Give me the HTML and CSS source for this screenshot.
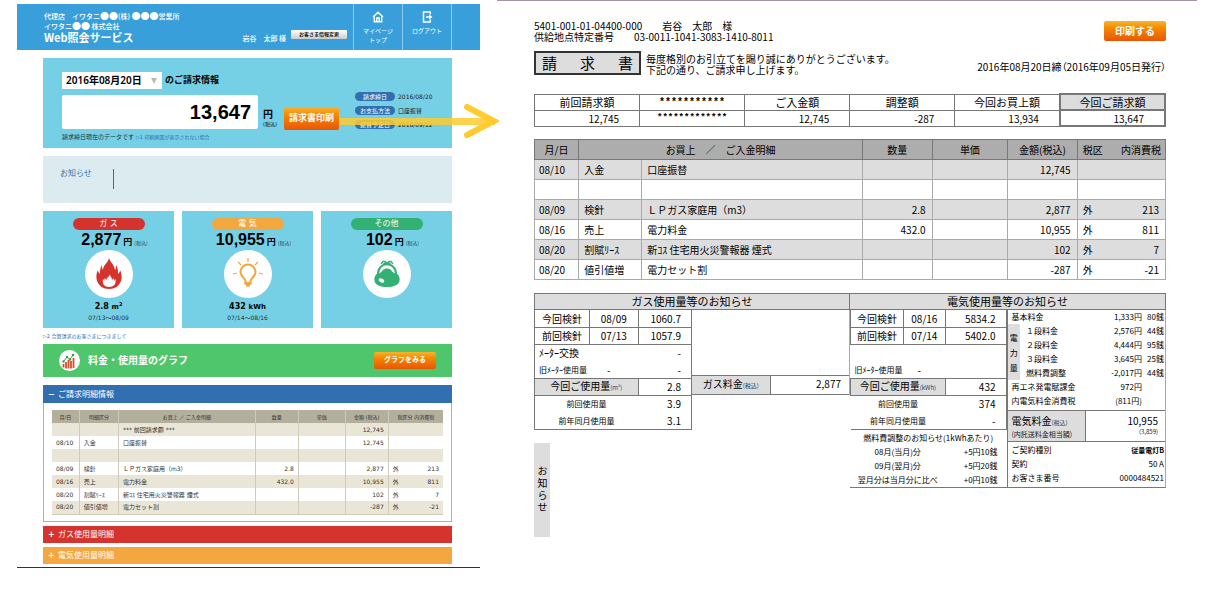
FILE: index.html
```html
<!DOCTYPE html>
<html lang="ja">
<head>
<meta charset="utf-8">
<title>Web照会サービス</title>
<link rel="stylesheet" href="styles.css">
</head>
<body>
<div class="page">
  <main class="portal">
    <header class="site-head">
      <div class="brand">
        <p>代理店　イワタニ<span>●●</span>(株) <span>●●●</span>営業所</p>
        <p>イワタニ<span>●●</span> 株式会社</p>
        <h1>Web照会サービス</h1>
      </div>
      <p class="user">岩谷　太郎 様</p>
      <button class="btn-profile" type="button">お客さま情報変更</button>
      <nav class="site-nav">
        <a href="#top"><svg viewBox="0 0 12 12" aria-hidden="true"><path d="M1 6 6 1.3 11 6M2.3 5.5v5.3h7.4V5.5M4.8 10.5V7h2.4v3.5" fill="none" stroke="#fff" stroke-width="1.4"/></svg>マイページ<br>トップ</a>
        <a href="#logout"><svg viewBox="0 0 12 12" aria-hidden="true"><path d="M9.3 3.500V1H2.500v10h6.800V8.500" fill="none" stroke="#fff" stroke-width="1.5"/><path d="M5 5.300h3V3.400L11.500 6 8 8.600V6.700H5z" fill="#fff"/></svg>ログアウト</a>
      </nav>
    </header>

    <div class="portal-body">
      <section class="hero">
        <div class="period">
          <span class="select-wrap"><select id="month"><option>2016年08月20日</option></select></span>
          <label for="month">のご請求情報</label>
        </div>
        <div class="hero-row">
          <div class="total">13,647</div>
          <div class="unit"><b>円</b><small>(税込)</small></div>
          <button class="btn-orange btn-bill" type="button">請求書印刷</button>
          <dl class="facts">
            <dt>請求締日</dt><dd>2016/08/20</dd>
            <dt>お支払方法</dt><dd>口座振替</dd>
            <dt>振替予定日</dt><dd>2016/09/12</dd>
          </dl>
        </div>
        <p class="hero-note">請求締日現在のデータです <a href="#n1">▷1 印刷画面が表示されない場合</a></p>
        <div class="arrow"><span class="arrow-line"></span><svg viewBox="0 0 36 36" aria-hidden="true"><path d="M4 4 31 18 4 32" fill="none" stroke="#ffcb2f" stroke-width="6" stroke-linecap="round" stroke-linejoin="miter"/></svg></div>
      </section>

      <section class="notice"><h2>お知らせ</h2><div class="notice-text"></div></section>

      <section class="cards">
        <article class="card">
          <h2 class="pill red">ガ ス</h2>
          <p class="price">2,877<b>円</b><small>(税込)</small></p>
          <div class="disc"><svg viewBox="0 0 48 48" aria-hidden="true"><path d="M24 8c1 4 5 6 6 12 1-1 1-3 1-5 2 3 2 6 2 9 1-1 2-2 2-4 2 4 2 8 1 11-2 5-6 8-12 8s-10-3-12-8c-1-4-1-7 1-11 0 2 1 3 2 4 0-3 0-6 2-9 0 2 0 4 1 5 0-5 5-7 6-12z" fill="#d5332d"/><path d="M25 24c0 3 2 3 2 6l2-2v3l1.500-2c1 5-2 8-6.500 8s-7-3-6-8l1.500 2v-3l2 2c0-3 3-3 3.500-6z" fill="#fff"/></svg></div>
          <p class="usage">2.8 <span>m<sup>2</sup></span></p>
          <p class="term">07/13〜08/09</p>
        </article>
        <article class="card">
          <h2 class="pill amber">電 気</h2>
          <p class="price">10,955<b>円</b><small>(税込)</small></p>
          <div class="disc"><svg viewBox="0 0 48 48" aria-hidden="true"><g fill="none" stroke="#f3a73f"><path d="M21.500 33v-2c0-3-5-4-5-9a7.500 7.500 0 0 1 15 0c0 5-5 6-5 9v2z" stroke-width="2"/><path d="M24 12V8M31 15l3-3M17 15l-3-3M35 23l4 1M13 23l-4 1" stroke-width="1.200"/></g><path d="M20.500 32h7v2.500h-1.500v2h-4v-2h-1.500z" fill="#f3a73f"/></svg></div>
          <p class="usage">432 <span>kWh</span></p>
          <p class="term">07/14〜08/16</p>
        </article>
        <article class="card">
          <h2 class="pill green">その他</h2>
          <p class="price">102<b>円</b><small>(税込)</small></p>
          <div class="disc"><svg viewBox="0 0 48 48" aria-hidden="true"><path d="M13.500 24c3 0 5-2 6.500-4 2-2 6-2 8 0 1.500 2 3.500 4 6.500 4 2 2 2.500 5 2 7-1 4-6 6-12.500 6S12.500 35 11.500 31c-.500-2 0-5 2-7z" fill="#33b073"/><path d="M15 24c0-13 18-13 18 0" fill="none" stroke="#33b073" stroke-width="2"/><path d="m18 14 2-2.500h2l2 1.500 2-1.500h2l2 2.500M20 14.500l2-1.500 2 1.500 2-1.500 2 1.500" fill="none" stroke="#33b073" stroke-width="1.300"/><ellipse cx="18.500" cy="30.500" rx="3" ry="1.800" fill="#fff" transform="rotate(25 18.500 30.500)"/></svg></div>
        </article>
      </section>

      <p class="card-note"><a href="#n2">▷2 合算請求のお客さまにつきまして</a></p>

      <section class="graph-bar">
        <svg viewBox="0 0 21 21" aria-hidden="true"><circle cx="10.500" cy="10.500" r="10.500" fill="#fff"/><path d="M4.500 14v3.500M7 12v6.500M9.500 10v8.500M12 11v7.500M14.500 8v10" stroke="#dc4a28" stroke-width="1.800"/><path d="M4.500 11.500 8 7l3 2.500 3-4.500" fill="none" stroke="#3b9c52" stroke-width="1"/><g fill="#3b9c52"><circle cx="4.500" cy="11.500" r="1.200"/><circle cx="8" cy="7" r="1.200"/><circle cx="11" cy="9.500" r="1.200"/><circle cx="14" cy="5" r="1.300"/></g></svg>
        <h2>料金・使用量のグラフ</h2>
        <button class="btn-orange btn-graph" type="button">グラフをみる</button>
      </section>

      <section class="detail">
        <h2><button class="fold blue" type="button"><span>−</span>ご請求明細情報</button></h2>
        <div class="detail-box">
          <table class="mini">
            <colgroup><col class="m1"><col class="m2"><col class="m3"><col class="m4"><col class="m5"><col class="m6"><col class="m7"><col class="m8"></colgroup>
            <thead><tr><th>月/日</th><th>明細区分</th><th>お買上 ／ ご入金明細</th><th>数量</th><th>単価</th><th>金額 (税込)</th><th colspan="2">税区分 内消費税</th></tr></thead>
            <tbody>
              <tr><td></td><td></td><td>*** 前回請求額 ***</td><td></td><td></td><td class="num">12,745</td><td></td><td class="num"></td></tr>
              <tr><td>08/10</td><td>入金</td><td>口座振替</td><td></td><td></td><td class="num">12,745</td><td></td><td class="num"></td></tr>
              <tr><td></td><td></td><td></td><td></td><td></td><td></td><td></td><td class="num"></td></tr>
              <tr><td>08/09</td><td>検針</td><td>ＬＰガス家庭用（m3）</td><td class="num">2.8</td><td></td><td class="num">2,877</td><td>外</td><td class="num">213</td></tr>
              <tr><td>08/16</td><td>売上</td><td>電力料金</td><td class="num">432.0</td><td></td><td class="num">10,955</td><td>外</td><td class="num">811</td></tr>
              <tr><td>08/20</td><td>割賦ﾘｰｽ</td><td>新ｺｽ 住宅用火災警報器 煙式</td><td></td><td></td><td class="num">102</td><td>外</td><td class="num">7</td></tr>
              <tr><td>08/20</td><td>値引値増</td><td>電力セット割</td><td></td><td></td><td class="num">-287</td><td>外</td><td class="num">-21</td></tr>
            </tbody>
          </table>
        </div>
      </section>
      <button class="fold crimson" type="button"><span>+</span>ガス使用量明細</button>
      <button class="fold gold" type="button"><span>+</span>電気使用量明細</button>
    </div>
  </main>

  <section class="invoice">
    <header class="inv-head">
      <div>
        <p>5401-001-01-04400-000　　岩谷　太郎　様</p>
        <p>供給地点特定番号　　03-0011-1041-3083-1410-8011</p>
      </div>
      <button class="btn-orange btn-print" type="button">印刷する</button>
    </header>
    <div class="inv-title">
      <h2><span>請</span><span>求</span><span>書</span></h2>
      <p class="greet">毎度格別のお引立てを賜り誠にありがとうございます。<br>下記の通り、ご請求申し上げます。</p>
      <p class="issued">2016年08月20日締（2016年09月05日発行）</p>
    </div>

    <table class="summary">
      <thead><tr><th>前回請求額</th><th class="stars">***********</th><th>ご入金額</th><th>調整額</th><th>今回お買上額</th><th class="key">今回ご請求額</th></tr></thead>
      <tbody><tr><td>12,745</td><td class="stars">*************</td><td>12,745</td><td>-287</td><td>13,934</td><td class="key">13,647</td></tr></tbody>
    </table>

    <table class="lines">
      <colgroup><col class="l1"><col class="l2"><col class="l3"><col class="l4"><col class="l5"><col class="l6"><col class="l7"><col class="l8"></colgroup>
      <thead><tr><th>月/日</th><th colspan="2">お買上　／　ご入金明細</th><th>数量</th><th>単価</th><th>金額(税込)</th><th class="open">税区</th><th class="tax">内消費税</th></tr></thead>
      <tbody>
        <tr><td>08/10</td><td>入金</td><td>口座振替</td><td></td><td></td><td class="num">12,745</td><td class="open"></td><td class="tax"></td></tr>
        <tr><td></td><td></td><td></td><td></td><td></td><td></td><td class="open"></td><td class="tax"></td></tr>
        <tr><td>08/09</td><td>検針</td><td>ＬＰガス家庭用（m3）</td><td class="num">2.8</td><td></td><td class="num">2,877</td><td class="open">外</td><td class="tax">213</td></tr>
        <tr><td>08/16</td><td>売上</td><td>電力料金</td><td class="num">432.0</td><td></td><td class="num">10,955</td><td class="open">外</td><td class="tax">811</td></tr>
        <tr><td>08/20</td><td>割賦ﾘｰｽ</td><td>新ｺｽ 住宅用火災警報器 煙式</td><td></td><td></td><td class="num">102</td><td class="open">外</td><td class="tax">7</td></tr>
        <tr><td>08/20</td><td>値引値増</td><td>電力セット割</td><td></td><td></td><td class="num">-287</td><td class="open">外</td><td class="tax">-21</td></tr>
      </tbody>
    </table>

    <div class="energy">
      <section class="gas">
        <h3>ガス使用量等のお知らせ</h3>
        <div class="gas-body">
          <table class="meter">
            <colgroup><col class="g1"><col class="g2"><col class="g3"></colgroup>
            <tr><th class="cell">今回検針</th><td class="cell mid">08/09</td><td class="cell">1060.7</td></tr>
            <tr><th class="cell">前回検針</th><td class="cell mid">07/13</td><td class="cell">1057.9</td></tr>
            <tr><th class="left">ﾒｰﾀｰ交換</th><td></td><td>-</td></tr>
            <tr><th class="small left">旧ﾒｰﾀｰ使用量</th><td class="old">-</td><td>-</td></tr>
            <tr><th class="cell shade" colspan="2">今回ご使用量<small>(m³)</small></th><td class="cell">2.8</td></tr>
            <tr><th class="small" colspan="2">前回使用量</th><td>3.9</td></tr>
            <tr><th class="small" colspan="2">前年同月使用量</th><td>3.1</td></tr>
          </table>
          <dl class="gas-fee"><dt>ガス料金<small>(税込)</small></dt><dd>2,877</dd></dl>
        </div>
        <aside class="side-note">お知らせ</aside>
      </section>

      <section class="power">
        <h3>電気使用量等のお知らせ</h3>
        <div class="power-body">
          <div class="power-left">
            <table class="meter">
              <colgroup><col class="p1"><col class="p2"><col class="p3"></colgroup>
              <tr><th class="cell">今回検針</th><td class="cell mid">08/16</td><td class="cell">5834.2</td></tr>
              <tr><th class="cell">前回検針</th><td class="cell mid">07/14</td><td class="cell">5402.0</td></tr>
              <tr><th></th><td></td><td></td></tr>
              <tr><th class="small left">旧ﾒｰﾀｰ使用量</th><td class="old">-</td><td></td></tr>
              <tr><th class="cell shade" colspan="2">今回ご使用量<small>(kWh)</small></th><td class="cell">432</td></tr>
              <tr><th class="small" colspan="2">前回使用量</th><td>374</td></tr>
              <tr><th class="small" colspan="2">前年同月使用量</th><td>-</td></tr>
            </table>
            <table class="adjust">
              <caption>燃料費調整のお知らせ(1kWhあたり)</caption>
              <tr><th>08月(当月)分</th><td>+5円10銭</td></tr>
              <tr><th>09月(翌月)分</th><td>+5円20銭</td></tr>
              <tr><th>翌月分は当月分に比べ</th><td>+0円10銭</td></tr>
            </table>
          </div>
          <div class="power-right">
            <table class="fees">
              <colgroup><col class="f1"><col class="f2"><col class="f3"><col class="f4"></colgroup>
              <tr><th colspan="2">基本料金</th><td>1,333円</td><td>80銭</td></tr>
              <tr><th class="kwh" rowspan="4">電<br>力<br>量</th><th class="step">１段料金</th><td>2,576円</td><td>44銭</td></tr>
              <tr><th class="step">２段料金</th><td>4,444円</td><td>95銭</td></tr>
              <tr><th class="step">３段料金</th><td>3,645円</td><td>25銭</td></tr>
              <tr><th class="step">燃料費調整</th><td>-2,017円</td><td>44銭</td></tr>
              <tr><th colspan="2">再エネ発電賦課金</th><td>972円</td><td></td></tr>
              <tr><th colspan="2">内電気料金消費税</th><td>(811円)</td><td></td></tr>
            </table>
            <dl class="power-fee"><dt>電気料金<small>(税込)</small><span>(内託送料金相当額)</span></dt><dd>10,955<span>(3,859)</span></dd></dl>
            <dl class="contract">
              <dt>ご契約種別</dt><dd><b>従量電灯B</b></dd>
              <dt>契約</dt><dd>50 A</dd>
              <dt>お客さま番号</dt><dd>0000484521</dd>
            </dl>
          </div>
        </div>
      </section>
    </div>
  </section>
</div>
</body>
</html>
```

FILE: styles.css
```css
* { box-sizing: border-box; }
body, h1, h2, h3, p, dl, dd { margin: 0; }
body { background: #fff; color: #000; font-family: "Noto Sans CJK JP", sans-serif; }
h1, h2, h3, th { font-weight: 400; }
button { margin: 0; padding: 0; border: 0; font-family: inherit; white-space: nowrap; cursor: pointer; }
a { color: inherit; text-decoration: none; }
table { width: 100%; border-collapse: collapse; table-layout: fixed; }
th, td { padding: 0; white-space: nowrap; }
svg { display: block; }

.page { display: grid; grid-template-columns: 463fr 700fr; gap: 17px; align-items: start; padding: 0 17px; }

/* Customer portal */
.portal { min-width: 0; margin-top: 4px; padding-bottom: 3px; border-bottom: 1px solid #33303c; font-family: "DejaVu Sans", "Noto Sans CJK JP", sans-serif; }
.site-head { display: flex; height: 46px; background: #389fdb; color: #fff; white-space: nowrap; }
.brand { flex: 1; padding: 7px 0 0 27px; font: 7px/10px "Noto Sans CJK JP", sans-serif; }
.brand p { font-weight: 500; }
.brand span { font-size: 9px; line-height: 8px; }
.brand h1 { font-size: 11px; line-height: 13px; font-weight: 700; }
.user { padding: 28px 5px 0 0; font: 500 7px/12px "Noto Sans CJK JP", sans-serif; }
.btn-profile { align-self: flex-start; width: 56px; height: 9px; margin: 26px 6px 0 0; border-radius: 1px; background: linear-gradient(#fff, #ccc); color: #222; font-size: 5px; line-height: 9px; font-weight: 700; }
.site-nav { display: flex; padding-right: 28px; }
.site-nav a { width: 49px; padding-top: 7px; border-left: 1px solid #8fcaf0; font-size: 6px; line-height: 9px; text-align: center; }
.site-nav a:last-child { width: 50px; border-right: 1px solid #8fcaf0; }
.site-nav svg { width: 12px; height: 12px; margin: 0 auto 3px; }

.portal-body { padding: 8px 28px 0 26px; }
.hero { position: relative; height: 90px; padding: 14px 19px 0; background: #76d0e5; }
.period { display: flex; align-items: center; gap: 3px; font-size: 9px; font-weight: 700; line-height: 17px; }
.select-wrap { position: relative; }
.select-wrap::after { content: ""; position: absolute; right: 5px; top: 6px; border: 3px solid transparent; border-top: 6px solid #bcbcab; border-bottom: 0; pointer-events: none; }
.select-wrap select { display: block; width: 100px; height: 17px; padding: 0 4px; border: 0; appearance: none; background: #fff; color: #000; font: inherit; font-family: "Noto Sans", "Noto Sans CJK JP", sans-serif; font-size: 10px; font-weight: 600; line-height: 17px; }
.hero-row { display: flex; align-items: flex-start; margin-top: 6px; }
.total { flex: 1; height: 34px; padding-right: 7px; border-radius: 2px; background: #fff; font: 700 20px/34px "Liberation Sans", sans-serif; text-align: right; }
.unit { display: grid; width: 26px; padding: 14px 0 0 5px; font-size: 10px; line-height: 12px; }
.unit small { font-size: 5px; line-height: 7px; }
.btn-orange { border-radius: 2px; background: linear-gradient(#f9b32d, #f28a00 35%, #ea5504); color: #fff; font-weight: 700; }
.btn-bill { width: 55px; height: 23px; margin-top: 12px; font-size: 9px; line-height: 23px; }
.facts { display: grid; grid-template-columns: 40px 35px; column-gap: 3px; row-gap: 5px; width: 94px; margin-top: -3px; padding-left: 16px; font-size: 6px; line-height: 9px; white-space: nowrap; color: #222; }
.facts dt { border-radius: 5px; background: #3170b0; color: #fff; text-align: center; }
.hero-note { margin-top: 2px; font-size: 6px; line-height: 9px; color: #234; white-space: nowrap; }
.hero-note a, .card-note a { color: #2d6db5; font-size: 5px; }
.arrow { position: absolute; z-index: 1; left: calc(100% - 113px); right: -47px; top: 45px; display: flex; align-items: center; height: 36px; }
.arrow-line { flex: 1; height: 7px; margin-right: -32px; background: #ffcb2f; opacity: .85; }
.arrow svg { width: 36px; height: 36px; }

.notice { display: flex; align-items: flex-start; height: 47px; margin-top: 8px; padding: 13px 17px; background: #dcebef; color: #3170b0; }
.notice h2 { width: 53px; font-size: 8px; line-height: 10px; }
.notice-text { height: 20px; border-left: 1px solid #3170b0; }

.cards { display: grid; grid-template-columns: repeat(3, 1fr); gap: 8px; margin-top: 8px; }
.card { height: 117px; padding-top: 7px; background: #76d0e5; text-align: center; white-space: nowrap; }
.pill { width: 72px; margin: 0 auto; border-radius: 6px; color: #fff; font-size: 8px; line-height: 12px; }
.red { background: #d5332d; }
.amber { background: #f3a73f; }
.green { background: #33b073; }
.price { padding-left: 12px; font: 700 16px/20px "Liberation Sans", sans-serif; }
.price b { margin: 0 2px; font: 700 9px/10px "Noto Sans CJK JP", sans-serif; }
.price small { color: #345; font: 400 5px/6px "Noto Sans CJK JP", sans-serif; }
.disc { width: 48px; height: 48px; margin: 0 auto; border-radius: 50%; background: #fff; }
.usage { margin-top: 3px; font-size: 8px; line-height: 12px; font-weight: 700; }
.usage span { font-size: 7px; }
.usage sup { font-size: 5px; line-height: 5px; }
.term { font-size: 6px; line-height: 10px; color: #234; }
.card-note { margin-top: 3px; font-size: 5px; line-height: 10px; }

.graph-bar { display: flex; align-items: center; gap: 8px; height: 33px; margin-top: 3px; padding: 0 16px; background: #4fc66c; color: #fff; }
.graph-bar svg { width: 21px; height: 21px; }
.graph-bar h2 { flex: 1; font-size: 10px; line-height: 14px; font-weight: 700; white-space: nowrap; }
.btn-graph { width: 62px; height: 17px; font-size: 7px; line-height: 17px; }

.detail { margin-top: 8px; }
.fold { display: flex; width: 100%; height: 17px; align-items: center; gap: 4px; padding: 0 5px; color: #fff; font-size: 8px; line-height: 17px; }
.fold span { width: 6px; font-weight: 700; }
.blue { height: 18px; background: #3170b0; }
.crimson { margin-top: 4px; background: #d5332d; }
.gold { margin-top: 4px; background: #f3a73f; }
.detail-box { padding: 7px 8px 6px; border: 1px solid #94b4d4; border-top: 0; }
.mini { font-size: 6px; line-height: 8px; color: #333; border-bottom: 1px solid #cfcbb8; }
.mini th, .mini td { height: 13px; border-left: 1px solid #cfcbb8; }
.mini th { background: #b3af9d; font-size: 5px; }
.mini td { padding: 0 4px; }
.mini tr > :first-child, .mini td:last-child { border-left: 0; }
.mini tbody tr:nth-child(odd) { background: #e9e6d8; }
.mini .num { text-align: right; }
.m1 { width: 7%; } .m2 { width: 10%; } .m3 { width: 35%; } .m4 { width: 11%; }
.m5 { width: 12%; } .m6 { width: 11%; } .m7 { width: 4%; } .m8 { width: 10%; }

/* Printed invoice */
.invoice { min-width: 0; padding: 19px 31px 0 37px; border-top: 1px solid #a294a8; font-size: 10px; line-height: 11px; }
.inv-head { display: flex; justify-content: space-between; align-items: flex-start; height: 22px; white-space: nowrap; }
.btn-print { width: 62px; height: 20px; margin-top: 1px; font-size: 10px; line-height: 20px; }
.inv-title { display: flex; align-items: flex-start; gap: 5px; margin-top: 9px; white-space: nowrap; }
.inv-title h2 { display: flex; justify-content: space-between; width: 107px; padding: 0 6px; border: 2px solid #333; background: #ddd; font-size: 15px; line-height: 20px; }
.greet { flex: 1; padding-top: 2px; }
.issued { padding-top: 10px; font-feature-settings: "palt"; }

.summary { margin-top: 18px; }
.summary th, .summary td { height: 16px; border: 1px solid #777; }
.summary th { font-size: 11px; }
.summary td { padding-right: 20px; text-align: right; }
.summary .stars { padding: 0; font-family: "Liberation Mono", monospace; font-size: 10px; font-weight: 700; text-align: center; }
.summary td.stars { font-size: 9px; }
.summary .key { border: 2px solid #777; }
.summary th.key { background: #ddd; border-bottom-width: 1px; }

.lines { margin-top: 12px; border: 1px solid #777; }
.lines th, .lines td { height: 20px; border: 1px solid #aaa; }
.lines td { padding: 0 4px; }
.lines th { background: #adadad; border-color: #777; }
.lines tbody tr:nth-child(odd) { background: #ddd; }
.lines td:nth-child(n+2) { padding-left: 5px; }
.lines .num { padding-right: 6px; text-align: right; }
.lines .open { border-right: 0; padding-left: 5px; text-align: left; }
.lines .tax { border-left: 0; padding-right: 6px; text-align: right; }
.lines th.tax { padding-right: 4px; }
.l1 { width: 7%; } .l2 { width: 10%; } .l3 { width: 35%; } .l4 { width: 11%; }
.l5 { width: 12%; } .l6 { width: 11%; } .l7 { width: 4%; } .l8 { width: 10%; }

.energy { display: grid; grid-template-columns: 1fr 1fr; align-items: start; margin-top: 13px; }
.energy h3 { height: 17px; border: 1px solid #777; background: #ddd; font-size: 11px; line-height: 15px; text-align: center; }
.power h3 { border-left: 0; }
.gas-body, .power-body { display: grid; grid-template-columns: 1fr 1fr; align-items: start; }
.meter { border: 1px solid #777; border-top: 0; }
.meter th, .meter td { height: 17px; }
.meter td { padding-right: 10px; text-align: right; }
.meter .mid { padding: 0; text-align: center; }
.meter .cell { border: 1px solid #777; }
.meter tr:first-child .cell { border-top: 0; }
.meter .shade { background: #ddd; }
.meter .small { font-size: 8px; }
.meter .left { padding-left: 4px; text-align: left; }
.meter td.old { text-align: center; }
.meter small, .gas-fee small, .power-fee small { font-size: 6px; color: #246; }
.g1 { width: 35%; } .g2 { width: 31%; } .g3 { width: 34%; }
.p1 { width: 34%; } .p2 { width: 27%; } .p3 { width: 39%; }
.gas-fee { display: grid; grid-template-columns: 1fr 1fr; padding-top: 65px; border-right: 1px solid #aaa; line-height: 16px; }
.gas-fee dt, .gas-fee dd { border: 1px solid #777; border-left: 0; }
.gas-fee dt { background: #ddd; text-align: center; }
.gas-fee dd { padding-right: 8px; border-right: 0; text-align: right; }
.side-note { width: 16px; height: 94px; margin-top: 13px; background: #ddd; line-height: 16px; letter-spacing: 2px; writing-mode: vertical-rl; text-align: center; }

.power-body { border-right: 1px solid #aaa; align-items: stretch; border-bottom: 1px solid #777; }
.power-left .meter { border-left: 0; }
.adjust, .fees, .contract { font-size: 8px; line-height: 10px; }
.adjust caption { height: 15px; line-height: 15px; white-space: nowrap; }
.adjust th { width: 61%; height: 14px; }
.adjust td { padding-right: 9px; text-align: right; }
.power-left { border-right: 1px solid #777; }
.fees th, .fees td { height: 14px; }
.fees th { padding-left: 4px; text-align: left; }
.fees td { padding-right: 1px; text-align: right; }
.fees .kwh { padding: 0; background: #ddd; background-clip: content-box; line-height: 15px; text-align: center; }
.fees .step { padding-left: 6px; }
.f1 { width: 8%; } .f2 { width: 46%; } .f3 { width: 32%; } .f4 { width: 14%; }
.power-fee { display: grid; grid-template-columns: 1fr 1fr; margin-top: 2px; border: 1px solid #777; border-width: 1px 0; }
.power-fee dt, .power-fee dd { height: 30px; padding: 4px 4px 0; line-height: 12px; white-space: nowrap; }
.power-fee dt { background: #ddd; border-right: 1px solid #777; }
.power-fee dd { padding-right: 7px; text-align: right; }
.power-fee span { display: block; font-size: 7px; line-height: 10px; color: #123; }
.power-fee dd span { font-size: 6px; }
.contract { display: grid; grid-template-columns: auto auto; padding: 1px 1px 0 4px; line-height: 14px; }
.contract dd { text-align: right; }
.contract b { font-size: 7px; }
```
